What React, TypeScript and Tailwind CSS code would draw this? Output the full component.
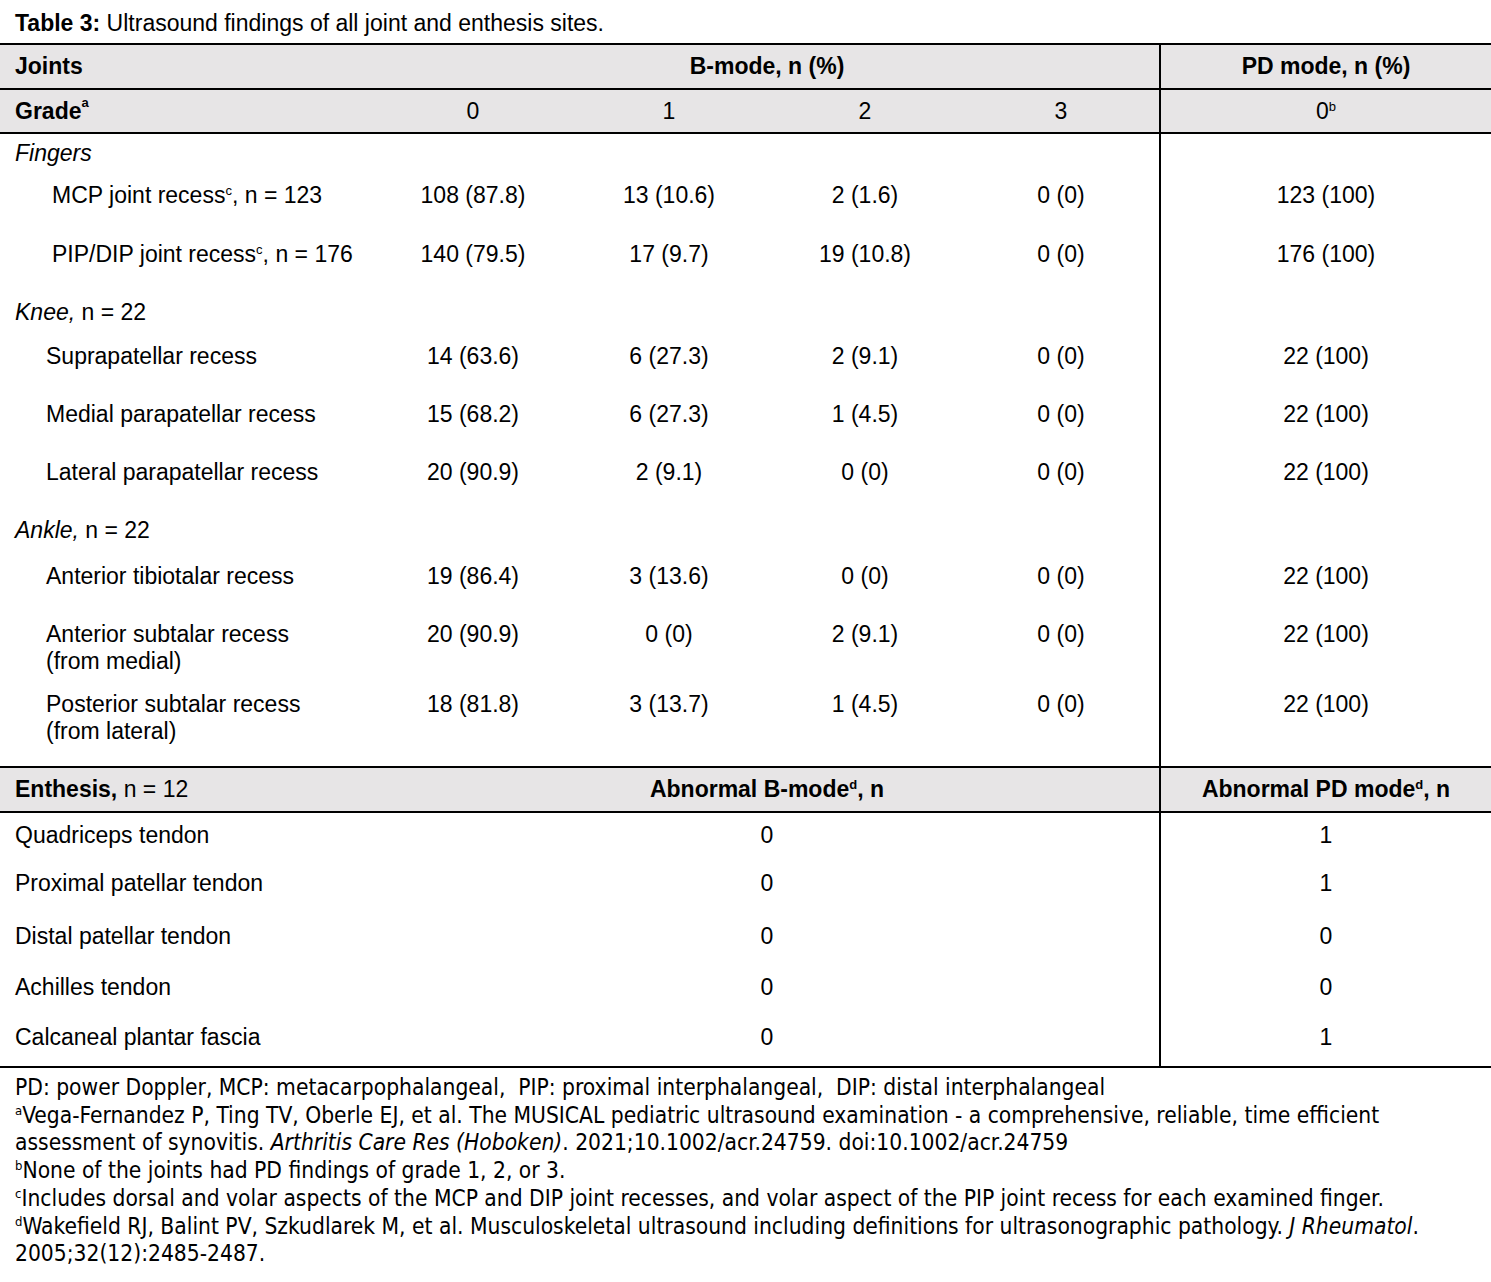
import type { ReactNode } from "react";

type BodyRow = {
  label: ReactNode;
  h: string;
  pt?: string;
  pad: string;
  vals?: string[];
};

const rows: BodyRow[] = [
  { label: <i>Fingers</i>, h: "h-[48px]", pt: "pt-[6px]", pad: "pl-[15px]" },
  {
    label: (
      <>
        MCP joint recess<Sup>c</Sup>, n = 123
      </>
    ),
    h: "h-[59px]",
    pad: "pl-[52px]",
    vals: ["108 (87.8)", "13 (10.6)", "2 (1.6)", "0 (0)", "123 (100)"],
  },
  {
    label: (
      <>
        PIP/DIP joint recess<Sup>c</Sup>, n = 176
      </>
    ),
    h: "h-[58px]",
    pad: "pl-[52px]",
    vals: ["140 (79.5)", "17 (9.7)", "19 (10.8)", "0 (0)", "176 (100)"],
  },
  {
    label: (
      <>
        <i>Knee,</i> n = 22
      </>
    ),
    h: "h-[44px]",
    pad: "pl-[15px]",
  },
  {
    label: "Suprapatellar recess",
    h: "h-[58px]",
    pad: "pl-[46px]",
    vals: ["14 (63.6)", "6 (27.3)", "2 (9.1)", "0 (0)", "22 (100)"],
  },
  {
    label: "Medial parapatellar recess",
    h: "h-[58px]",
    pad: "pl-[46px]",
    vals: ["15 (68.2)", "6 (27.3)", "1 (4.5)", "0 (0)", "22 (100)"],
  },
  {
    label: "Lateral parapatellar recess",
    h: "h-[58px]",
    pad: "pl-[46px]",
    vals: ["20 (90.9)", "2 (9.1)", "0 (0)", "0 (0)", "22 (100)"],
  },
  {
    label: (
      <>
        <i>Ankle,</i> n = 22
      </>
    ),
    h: "h-[46px]",
    pad: "pl-[15px]",
  },
  {
    label: "Anterior tibiotalar recess",
    h: "h-[58px]",
    pad: "pl-[46px]",
    vals: ["19 (86.4)", "3 (13.6)", "0 (0)", "0 (0)", "22 (100)"],
  },
  {
    label: (
      <>
        Anterior subtalar recess
        <br />
        (from medial)
      </>
    ),
    h: "h-[70px]",
    pad: "pl-[46px]",
    vals: ["20 (90.9)", "0 (0)", "2 (9.1)", "0 (0)", "22 (100)"],
  },
  {
    label: (
      <>
        Posterior subtalar recess
        <br />
        (from lateral)
      </>
    ),
    h: "h-[75px]",
    pad: "pl-[46px]",
    vals: ["18 (81.8)", "3 (13.7)", "1 (4.5)", "0 (0)", "22 (100)"],
  },
];

const enthesis: { label: string; h: string; pt?: string; b: string; pd: string }[] = [
  { label: "Quadriceps tendon", h: "h-[57px]", pt: "pt-[9px]", b: "0", pd: "1" },
  { label: "Proximal patellar tendon", h: "h-[53px]", b: "0", pd: "1" },
  { label: "Distal patellar tendon", h: "h-[51px]", b: "0", pd: "0" },
  { label: "Achilles tendon", h: "h-[50px]", b: "0", pd: "0" },
  { label: "Calcaneal plantar fascia", h: "h-[42px]", b: "0", pd: "1" },
];

function Sup({ children }: { children: ReactNode }) {
  return <sup className="text-[13px] top-[-8px]">{children}</sup>;
}

const cols = "grid grid-cols-[375px_196px_196px_196px_196px_1fr]";

export default function App() {
  return (
    <div className="min-h-screen bg-white text-black font-['Liberation_Sans',Arial,sans-serif] text-[23px] leading-[27px]">
      <div className="h-[43px] pl-[15px] pt-[10px]">
        <b>Table 3:</b> Ultrasound findings of all joint and enthesis sites.
      </div>

      <div className="w-full border-t-2 border-b-2 border-black">
        {/* header */}
        <div className={`${cols} h-[45px] bg-[#e7e5e6] border-b-2 border-black font-bold`}>
          <div className="pl-[15px] flex items-center">Joints</div>
          <div className="col-span-4 flex items-center justify-center">B-mode, n (%)</div>
          <div className="border-l-2 border-black flex items-center justify-center">PD mode, n (%)</div>
        </div>
        <div className={`${cols} h-[44px] bg-[#e7e5e6] border-b-2 border-black`}>
          <div className="pl-[15px] flex items-center font-bold">
            Grade<Sup>a</Sup>
          </div>
          <div className="flex items-center justify-center">0</div>
          <div className="flex items-center justify-center">1</div>
          <div className="flex items-center justify-center">2</div>
          <div className="flex items-center justify-center">3</div>
          <div className="border-l-2 border-black flex items-center justify-center">
            <span>
              0<Sup>b</Sup>
            </span>
          </div>
        </div>

        {rows.map((r, i) => (
          <div key={i} className={`${cols} ${r.h}`}>
            <div className={`${r.pad} ${r.pt ?? ""}`}>{r.label}</div>
            {[0, 1, 2, 3].map((c) => (
              <div key={c} className={`text-center ${r.pt ?? ""}`}>
                {r.vals ? r.vals[c] : ""}
              </div>
            ))}
            <div className={`border-l-2 border-black text-center ${r.pt ?? ""}`}>{r.vals ? r.vals[4] : ""}</div>
          </div>
        ))}

        {/* enthesis */}
        <div className={`${cols} h-[47px] bg-[#e7e5e6] border-t-2 border-b-2 border-black`}>
          <div className="pl-[15px] flex items-center">
            <b>Enthesis,</b>&nbsp;n = 12
          </div>
          <div className="col-span-4 flex items-center justify-center font-bold">
            <span>
              Abnormal B-mode<Sup>d</Sup>, n
            </span>
          </div>
          <div className="border-l-2 border-black flex items-center justify-center font-bold">
            <span>
              Abnormal PD mode<Sup>d</Sup>, n
            </span>
          </div>
        </div>

        {enthesis.map((e, i) => (
          <div key={i} className={`${cols} ${e.h}`}>
            <div className={`pl-[15px] ${e.pt ?? ""}`}>{e.label}</div>
            <div className={`col-span-4 text-center ${e.pt ?? ""}`}>{e.b}</div>
            <div className={`border-l-2 border-black text-center ${e.pt ?? ""}`}>{e.pd}</div>
          </div>
        ))}
      </div>

      <div className="mt-[6px] pl-[15px] font-['Liberation_Sans_Narrow','Arial_Narrow','DejaVu_Sans_Condensed',sans-serif] text-[22.6px] leading-[27.7px]">
        <div>PD: power Doppler, MCP: metacarpophalangeal, &nbsp;PIP: proximal interphalangeal, &nbsp;DIP: distal interphalangeal</div>
        <div>
          <Sup>a</Sup>Vega-Fernandez P, Ting TV, Oberle EJ, et al. The MUSICAL pediatric ultrasound examination - a comprehensive, reliable, time efficient
          <br />
          assessment of synovitis. <i>Arthritis Care Res (Hoboken)</i>. 2021;10.1002/acr.24759. doi:10.1002/acr.24759
        </div>
        <div>
          <Sup>b</Sup>None of the joints had PD findings of grade 1, 2, or 3.
        </div>
        <div>
          <Sup>c</Sup>Includes dorsal and volar aspects of the MCP and DIP joint recesses, and volar aspect of the PIP joint recess for each examined finger.
        </div>
        <div>
          <Sup>d</Sup>Wakefield RJ, Balint PV, Szkudlarek M, et al. Musculoskeletal ultrasound including definitions for ultrasonographic pathology. <i>J Rheumatol</i>.
          <br />
          2005;32(12):2485-2487.
        </div>
      </div>
    </div>
  );
}
